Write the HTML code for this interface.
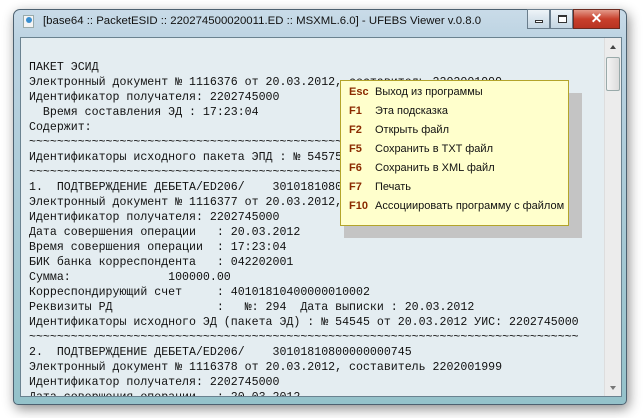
<!DOCTYPE html>
<html><head><meta charset="utf-8"><style>
*{margin:0;padding:0;box-sizing:border-box}
body{width:643px;height:418px;background:#fff;position:relative;overflow:hidden;font-family:"Liberation Sans",sans-serif}
.win{position:absolute;left:13px;top:9px;width:614px;height:396px;border-radius:7px 7px 5px 5px;background:linear-gradient(180deg,#c9dbe8 0,#bcd3e2 30px,#a9cad6 200px,#94c2ca 396px);border:1px solid #4d6170;box-shadow:2px 4px 12px rgba(0,0,0,.45)}
.title{position:absolute;left:43px;top:15px;font-size:11.4px;color:#111;white-space:nowrap}
.icon{position:absolute;left:23px;top:15px;width:11px;height:13px;background:#f4f4f4;border:1px solid #9aa;}
.icon:after{content:"";position:absolute;left:2px;top:1px;width:6px;height:6px;border-radius:50%;background:#3a8fd0}
.btns{position:absolute;left:517px;top:9px;height:20px;width:103px}
.b{position:absolute;top:0;height:20px;border:1px solid #6a7d8c;background:linear-gradient(#eef4f8,#c3d5e2)}
.cl{background:linear-gradient(#e49a8a,#c8402c 50%,#b83422);border-color:#6b2a20}
.content{position:absolute;left:20px;top:37px;width:602px;height:360px;background:#e4edf1;border:1px solid #6a8290;overflow:hidden}
pre{position:absolute;left:8px;top:22px;font-family:"Liberation Mono",monospace;font-size:11.6px;line-height:15px;color:#111}
.sb{position:absolute;right:0;top:0;width:17px;height:100%;background:#ececec;border-left:1px solid #ddd}
.thumb{position:absolute;left:1px;top:19px;width:14px;height:34px;border:1px solid #9aa;border-radius:2px;background:linear-gradient(90deg,#f4f4f4,#dcdcdc)}
.pop{position:absolute;left:340px;top:80px;width:229px;height:146px;background:#ffffcc;border:1px solid #b3a42a;font-size:11px}
.sh{position:absolute;left:344px;top:93px;width:238px;height:145px;background:#c4c4c4}
.row{position:absolute;left:8px;height:14px;white-space:nowrap;color:#111}
.row b{display:inline-block;width:26px;color:#8a2a00;font-weight:bold}
</style></head><body>
<div class="win"></div>
<div class="icon"></div>
<div class="title">[base64 :: PacketESID :: 220274500020011.ED :: MSXML.6.0] - UFEBS Viewer v.0.8.0</div>
<div class="btns">
<div class="b" style="left:10px;width:23px"><div style="position:absolute;left:7px;top:10px;width:8px;height:3px;border:1px solid #333;background:#fff"></div></div>
<div class="b" style="left:33px;width:23px"><div style="position:absolute;left:7px;top:5px;width:9px;height:8px;border:1px solid #333;border-top-width:2px;background:#fff"></div></div>
<div class="b cl" style="left:56px;width:47px;color:#fff;font-weight:bold;font-size:14px;text-align:center;line-height:17px">✕</div>
</div>
<div class="content">
<pre>ПАКЕТ ЭСИД
Электронный документ № 1116376 от 20.03.2012, составитель 2202001999
Идентификатор получателя: 2202745000
  Время составления ЭД : 17:23:04
Содержит:
~~~~~~~~~~~~~~~~~~~~~~~~~~~~~~~~~~~~~~~~~~~~~~~~~~~~~~~~~~~~~~~~~~~~~~~~~~~~~~~
Идентификаторы исходного пакета ЭПД : № 54575 от 20.03.2012 УИС: 2202745000
~~~~~~~~~~~~~~~~~~~~~~~~~~~~~~~~~~~~~~~~~~~~~~~~~~~~~~~~~~~~~~~~~~~~~~~~~~~~~~~
1.  ПОДТВЕРЖДЕНИЕ ДЕБЕТА/ED206/    30101810800000000745
Электронный документ № 1116377 от 20.03.2012, составитель 2202001999
Идентификатор получателя: 2202745000
Дата совершения операции   : 20.03.2012
Время совершения операции  : 17:23:04
БИК банка корреспондента   : 042202001
Сумма:              100000.00
Корреспондирующий счет     : 40101810400000010002
Реквизиты РД               :   №: 294  Дата выписки : 20.03.2012
Идентификаторы исходного ЭД (пакета ЭД) : № 54545 от 20.03.2012 УИС: 2202745000
~~~~~~~~~~~~~~~~~~~~~~~~~~~~~~~~~~~~~~~~~~~~~~~~~~~~~~~~~~~~~~~~~~~~~~~~~~~~~~~
2.  ПОДТВЕРЖДЕНИЕ ДЕБЕТА/ED206/    30101810800000000745
Электронный документ № 1116378 от 20.03.2012, составитель 2202001999
Идентификатор получателя: 2202745000
Дата совершения операции   : 20.03.2012</pre>
<div class="sb"><div style="position:absolute;left:5px;top:7px;border:3px solid transparent;border-bottom:4px solid #444;border-top:0"></div><div class="thumb"></div><div style="position:absolute;left:5px;bottom:6px;border:3px solid transparent;border-top:4px solid #777;border-bottom:0"></div></div>
</div>
<div class="sh"></div>
<div class="pop">
<div class="row" style="top:5px"><b>Esc</b>Выход из программы</div>
<div class="row" style="top:24px"><b>F1</b>Эта подсказка</div>
<div class="row" style="top:43px"><b>F2</b>Открыть файл</div>
<div class="row" style="top:62px"><b>F5</b>Сохранить в TXT файл</div>
<div class="row" style="top:81px"><b>F6</b>Сохранить в XML файл</div>
<div class="row" style="top:100px"><b>F7</b>Печать</div>
<div class="row" style="top:119px"><b>F10</b>Ассоциировать программу с файлом</div>
</div>
</body></html>
